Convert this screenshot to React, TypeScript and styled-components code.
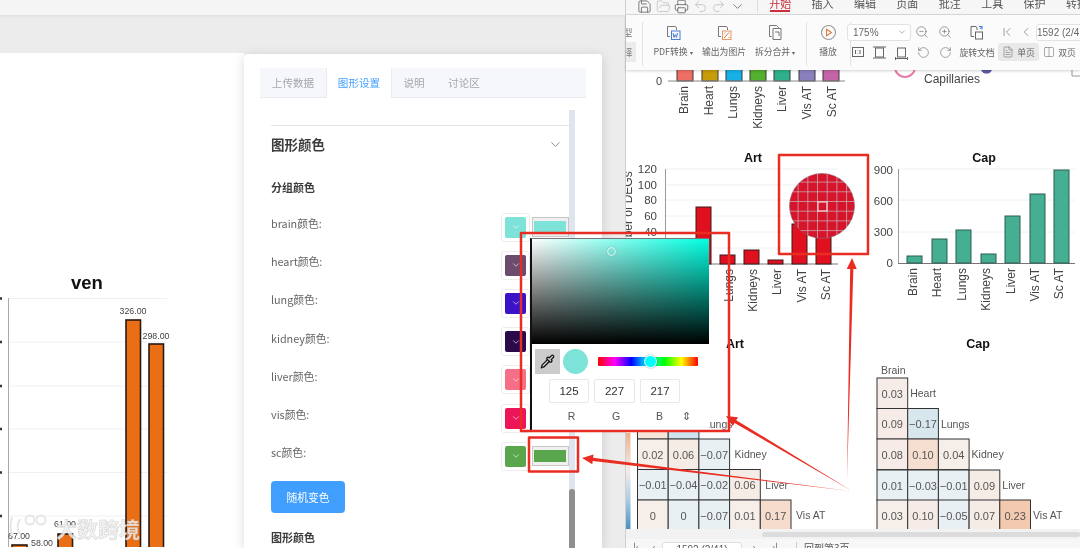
import React from 'react';
import styled, { createGlobalStyle } from 'styled-components';
import {
  ChevronDown, ChevronFirst, ChevronLeft, Columns2, FileText, Pipette, Redo2,
  RotateCcw, RotateCw, Save, Undo2, ZoomIn, ZoomOut, Printer, FolderOpen,
} from 'lucide-react';

const Global = createGlobalStyle`
  html, body { margin: 0; padding: 0; background: #fff; }
  body { font-family: "Liberation Sans", "Noto Sans CJK SC", sans-serif; }
  #root { width: 1080px; height: 548px; overflow: hidden; }
`;

const CJK = `"Noto Sans CJK SC", "Liberation Sans", sans-serif`;

const Page = styled.div`
  position: relative;
  display: flex;
  width: 1080px;
  height: 548px;
  overflow: hidden;
  filter: blur(0.3px);
`;

/* ------- left window ------- */
const LeftWindow = styled.div`
  width: 626px;
  flex: none;
  display: flex;
  flex-direction: column;
  background: #ececec;
`;
const TopStrip = styled.div`
  height: 15px;
  flex: none;
  background: #f5f5f5;
  box-shadow: 0 1px 3px rgba(0, 0, 0, 0.07);
`;
const GreyStrip = styled.div`
  height: 38px;
  flex: none;
`;
const LeftBody = styled.div`
  flex: 1;
  min-height: 0;
  display: flex;
`;
const ChartPane = styled.div`
  width: 244px;
  flex: none;
  background: #fff;
  svg { display: block; }
`;
const Panel = styled.div`
  width: 358px;
  flex: none;
  margin-top: 1px;
  background: #fff;
  border-radius: 3px 3px 0 0;
  box-shadow: 0 2px 12px rgba(0, 0, 0, 0.14);
  padding: 14px 16px 0;
  box-sizing: border-box;
  display: flex;
  flex-direction: column;
  overflow: hidden;
  font-family: ${CJK};
  position: relative;
`;
const Tabs = styled.div`
  display: flex;
  height: 30px;
  flex: none;
  background: #f5f7fa;
  border-bottom: 1px solid #e8ebf0;
  box-sizing: border-box;
`;
const Tab = styled.div<{ $active?: boolean; $w: number }>`
  width: ${(p) => p.$w}px;
  text-align: center;
  line-height: 30px;
  font-size: 10.6px;
  color: ${(p) => (p.$active ? '#409eff' : '#a3a6ad')};
  background: ${(p) => (p.$active ? '#fff' : 'transparent')};
  box-sizing: border-box;
  height: 30px;
  ${(p) => (p.$active ? 'border-left: 1px solid #e8ebf0; border-right: 1px solid #e8ebf0;' : '')}
`;
const ScrollBody = styled.div`
  flex: 1;
  min-height: 0;
  margin-top: 12px;
  display: flex;
  overflow: hidden;
`;
const Content = styled.div`
  width: 298px;
  margin-left: 11px;
  padding-top: 15px;
  flex: none;
`;
const Track = styled.div`
  width: 6px;
  flex: none;
  background: #dfe5ef;
  display: flex;
  flex-direction: column;
  justify-content: flex-end;
`;
const Thumb = styled.div`
  height: 59px;
  background: #8f8f8f;
  border-radius: 3px 3px 0 0;
`;
const AccordionHead = styled.div`
  border-top: 1px solid #e2e4e8;
  height: 36px;
  display: flex;
  align-items: center;
  justify-content: space-between;
  padding-right: 6px;
  font-size: 13.5px;
  font-weight: 700;
  color: #3c3c3c;
  svg { color: #70757d; }
`;
const SubHead = styled.div`
  margin-top: 17px;
  height: 17px;
  line-height: 17px;
  font-size: 11px;
  font-weight: 700;
  color: #3c3c3c;
`;
const ColorRows = styled.div`
  margin-top: 12px;
`;
const ColorRow = styled.div`
  height: 38.2px;
  display: flex;
  align-items: center;
  justify-content: space-between;
`;
const RowLabel = styled.span`
  font-size: 10.8px;
  color: #666;
  margin-bottom: 8px;
`;
const Swatches = styled.div`
  display: flex;
  align-items: center;
  gap: 2px;
`;
const SwatchBox = styled.div`
  width: 29px;
  height: 29px;
  box-sizing: border-box;
  border: 1px solid #ededed;
  border-radius: 3px;
  padding: 3px;
  background: #fff;
`;
const SwatchFill = styled.div<{ $c: string }>`
  width: 100%;
  height: 100%;
  border-radius: 2px;
  background: ${(p) => p.$c};
  display: flex;
  align-items: center;
  justify-content: center;
  color: #fff;
`;
const ColorBar = styled.div<{ $c: string }>`
  width: 37px;
  height: 20px;
  box-sizing: border-box;
  border: 1px solid #c6c6c6;
  background: #f0f0f0;
  padding: 3px 2px 3px 1px;
  &::before {
    content: '';
    display: block;
    height: 100%;
    background: ${(p) => p.$c};
  }
`;
const RandomButton = styled.button`
  display: block;
  margin-top: 6px;
  width: 74px;
  height: 32px;
  border: 0;
  border-radius: 4px;
  background: #409eff;
  color: #fff;
  font-family: ${CJK};
  font-size: 10.8px;
`;
const BottomHead = styled(SubHead)`
  margin-top: 16px;
  font-weight: 700;
`;

/* ------- right window ------- */
const RightWindow = styled.div`
  flex: 1;
  min-width: 0;
  display: flex;
  flex-direction: column;
  background: #fff;
  font-family: ${CJK};
  border-left: 1px solid #cfcfcf;
  margin-left: -1px;
  position: relative;
`;
const RibbonTabs = styled.div`
  height: 15px;
  flex: none;
  display: flex;
  align-items: flex-start;
  background: #f6f6f6;
  border-bottom: 1px solid #dcdcdc;
  box-sizing: border-box;
  overflow: hidden;
  color: #555;
`;
const QuickIcons = styled.div`
  width: 133px;
  flex: none;
  display: flex;
  align-items: center;
  padding-left: 11px;
  box-sizing: border-box;
  gap: 3.5px;
  height: 14px;
  margin-top: -1px;
  svg { width: 15px; height: 15px; flex: none; }
`;
const QuickDivider = styled.div`
  width: 1px;
  height: 14px;
  margin-left: 9px;
  background: #ddd;
  flex: none;
`;
const RibbonTab = styled.div<{ $active?: boolean }>`
  width: 42.4px;
  flex: none;
  text-align: center;
  font-size: 11px;
  line-height: 14px;
  height: 14px;
  margin-top: -4px;
  color: ${(p) => (p.$active ? '#c9303a' : '#555')};
  position: relative;
  ${(p) =>
    p.$active
      ? `&::after { content: ''; position: absolute; left: 11px; right: 11px; bottom: -2px; height: 2px; background: #c9303a; }`
      : ''}
`;
const Tools = styled.div`
  height: 55px;
  flex: none;
  display: flex;
  background: #fbfbfb;
  box-shadow: 0 1px 3px rgba(0, 0, 0, 0.18);
  position: relative;
  z-index: 1;
  color: #666;
  font-size: 8.8px;
  overflow: hidden;
`;
const Stub = styled.div`
  width: 16px;
  flex: none;
  margin-top: 7px;
  height: 44px;
  border-right: 1px solid #e4e4e4;
  display: flex;
  flex-direction: column;
  font-size: 9.5px;
  color: #777;
`;
const StubCell = styled.div<{ $on?: boolean }>`
  height: 20px;
  line-height: 20px;
  text-indent: -3px;
  width: 10px;
  background: ${(p) => (p.$on ? '#ececec' : 'transparent')};
`;
const BigGroup = styled.div`
  display: flex;
  padding: 0 5px 0 4.5px;
  margin-top: 7px;
  height: 44px;
  border-right: 1px solid #e4e4e4;
  flex: none;
`;
const BigTool = styled.div<{ $w: number }>`
  width: ${(p) => p.$w}px;
  flex: none;
  display: flex;
  flex-direction: column;
  align-items: center;
  white-space: nowrap;
`;
const BigIconSlot = styled.div`
  height: 20px;
  display: flex;
  align-items: center;
  justify-content: center;
`;
const BigLabel = styled.div`
  height: 20px;
  line-height: 20px;
`;
const Caret = styled.span`
  font-size: 6px;
  margin-left: 2px;
`;
const Controls = styled.div`
  padding-top: 7px;
  display: flex;
  flex-direction: column;
  flex: none;
  margin-left: -4px;
`;
const ControlRow = styled.div`
  height: 20px;
  display: flex;
  align-items: center;
`;
const ZoomSelect = styled.div`
  width: 64px;
  height: 17px;
  box-sizing: border-box;
  border: 1px solid #e2e2e2;
  border-radius: 3px;
  background: #fff;
  display: flex;
  align-items: center;
  justify-content: space-between;
  padding: 0 3px 0 5px;
  font-size: 10px;
  font-family: "Liberation Sans", sans-serif;
  color: #666;
`;
const Slot = styled.div<{ $w: number }>`
  width: ${(p) => p.$w}px;
  flex: none;
  display: flex;
  align-items: center;
  justify-content: center;
  white-space: nowrap;
`;
const PageInput = styled.div`
  margin-left: 3px;
  width: 60px;
  flex: none;
  height: 17px;
  box-sizing: border-box;
  border: 1px solid #e2e2e2;
  border-radius: 3px;
  background: #fff;
  text-align: right;
  padding-right: 11px;
  line-height: 15px;
  font-size: 10px;
  font-family: "Liberation Sans", sans-serif;
  white-space: nowrap;
`;
const ViewButton = styled.div<{ $on?: boolean }>`
  width: 41px;
  height: 18px;
  flex: none;
  border-radius: 3px;
  background: ${(p) => (p.$on ? '#e9e9e9' : 'transparent')};
  display: flex;
  align-items: center;
  justify-content: center;
  gap: 3px;
  white-space: nowrap;
`;
const DocArea = styled.div`
  flex: 1;
  min-height: 0;
  overflow: hidden;
  svg { display: block; }
`;
const HScroll = styled.div`
  height: 10px;
  flex: none;
  background: #f2f2f2;
  padding: 3px 0 2px 136px;
  box-sizing: border-box;
  position: relative;
`;
const HThumb = styled.div`
  height: 100%;
  background: #dcdcdc;
  border-radius: 3px;
`;
const StatusBar = styled.div`
  height: 9px;
  flex: none;
  background: #f7f7f7;
  display: flex;
  align-items: flex-start;
  color: #555;
  font-size: 10px;
  overflow: hidden;
`;
const StatusArrow = styled.div<{ $w: number }>`
  width: ${(p) => p.$w}px;
  flex: none;
  text-align: center;
  line-height: 12px;
  margin-top: 2px;
  font-size: 10px;
`;
const StatusInput = styled.div`
  width: 80px;
  flex: none;
  height: 16px;
  margin-top: 3px;
  box-sizing: border-box;
  border: 1px solid #dedede;
  border-radius: 3px;
  background: #fff;
  text-align: center;
  font-family: "Liberation Sans", sans-serif;
  line-height: 13px;
`;
const StatusText = styled.div`
  margin-left: 12px;
  padding-left: 7px;
  border-left: 1px solid #ccc;
  line-height: 12px;
  margin-top: 3px;
`;

/* ------- colour picker popover ------- */
const Picker = styled.div`
  position: absolute;
  left: 530px;
  top: 238px;
  width: 179px;
  height: 192px;
  box-sizing: border-box;
  background: #fff;
  border-left: 2px solid #111;
  border-top: 1px solid #777;
  z-index: 3;
  font-family: "Liberation Sans", sans-serif;
`;
const Spectrum = styled.div`
  position: relative;
  width: 177px;
  height: 105px;
  background:
    linear-gradient(to top, #000, transparent),
    linear-gradient(to right, #fff, #00ffe1);
`;
const SpectrumDot = styled.div`
  position: absolute;
  left: 75px;
  top: 8px;
  width: 7px;
  height: 7px;
  border: 1.5px solid #e8f4f2;
  border-radius: 50%;
  box-sizing: content-box;
  box-shadow: 0 0 1px rgba(0, 0, 0, 0.4);
`;
const PickerRow = styled.div`
  display: flex;
  align-items: center;
  padding: 5px 0 0 3px;
  height: 25px;
`;
const Dropper = styled.div`
  width: 25px;
  height: 25px;
  background: #ccc;
  display: flex;
  align-items: center;
  justify-content: center;
  color: #111;
  flex: none;
`;
const Preview = styled.div`
  width: 25px;
  height: 25px;
  margin-left: 3px;
  border-radius: 50%;
  background: rgb(125, 227, 217);
  flex: none;
`;
const Hue = styled.div`
  position: relative;
  width: 100px;
  height: 9px;
  margin-left: 10px;
  background: linear-gradient(to right, #f00, #f0f, #00f, #0ff, #0f0, #ff0, #f00);
  border-radius: 1px;
`;
const HueThumb = styled.div`
  position: absolute;
  left: 46px;
  top: -2px;
  width: 11px;
  height: 11px;
  border: 1px solid #fff;
  border-radius: 50%;
  background: #0ff;
  box-shadow: 0 0 2px rgba(0, 0, 0, 0.4);
`;
const ValueRow = styled.div`
  display: grid;
  grid-template-columns: 40px 41px 40px;
  column-gap: 5px;
  margin: 5px 0 0 17px;
`;
const ValueBox = styled.div`
  height: 24px;
  box-sizing: border-box;
  border: 1px solid #e8e8e8;
  border-radius: 2px;
  text-align: center;
  line-height: 22px;
  font-size: 11.5px;
  color: #333;
`;
const ValueLabels = styled.div`
  display: flex;
  margin: 6px 0 0 17px;
  font-size: 10.5px;
  color: #555;
  line-height: 14px;
`;
const ValueLabel = styled.div<{ $w: number }>`
  width: ${(p) => p.$w}px;
  flex: none;
  text-align: center;
`;
const Annotations = styled.svg`
  position: absolute;
  left: 0;
  top: 0;
  z-index: 4;
  pointer-events: none;
`;

/* ------- data ------- */
const colors: [string, string][] = [
  ['brain', '#7de3d9'],
  ['heart', '#6b4b6e'],
  ['lung', '#3a13c8'],
  ['kidney', '#2b0a4c'],
  ['liver', '#f56f87'],
  ['vis', '#ec1557'],
  ['sc', '#5aa64c'],
];
const organs = ['Brain', 'Heart', 'Lungs', 'Kidneys', 'Liver', 'Vis AT', 'Sc AT'];
const topBars: [number, string][] = [
  [677, '#ee6f66'], [702, '#c89d0a'], [726, '#17b1e8'], [750, '#54b02f'], [774, '#2fb08c'], [799, '#8b80be'], [823, '#c564a8'],
];
const artBars: [number, number][] = [[672, 240], [696, 207], [720, 255], [744, 250], [768, 260], [792, 224], [816, 235]];
const capBars: [number, number][] = [[907, 256], [932, 239], [956, 230], [981, 254], [1005, 216], [1030, 194], [1054, 170]];

type Cell = [string, string];
type HeatRow = { y: number; label: string; cells: Cell[] };
const capRows: HeatRow[] = [
  { y: 378, label: 'Heart', cells: [['0.03', '#f5ece8']] },
  { y: 408.5, label: 'Lungs', cells: [['0.09', '#f6ebe6'], ['−0.17', '#d8e6ee']] },
  { y: 439, label: 'Kidney', cells: [['0.08', '#f6ebe6'], ['0.10', '#f6dfd1'], ['0.04', '#f6eee9']] },
  { y: 470, label: 'Liver', cells: [['0.01', '#e9f0f4'], ['−0.03', '#e9f0f4'], ['−0.01', '#e9f0f4'], ['0.09', '#f6ece6']] },
  { y: 500, label: 'Vis AT', cells: [['0.03', '#f6eee9'], ['0.10', '#f6ebe6'], ['−0.05', '#e9f0f4'], ['0.07', '#f6ece6'], ['0.23', '#f3c9b0']] },
];
const artRows: HeatRow[] = [
  { y: 408.5, label: 'Lungs', cells: [['', '#f6e4d9'], ['', '#cfe3ee']] },
  { y: 439, label: 'Kidney', cells: [['0.02', '#f6eee9'], ['0.06', '#f6ece6'], ['−0.07', '#e9f0f4']] },
  { y: 469.5, label: 'Liver', cells: [['−0.01', '#e9f0f4'], ['−0.04', '#e9f0f4'], ['−0.02', '#e9f0f4'], ['0.06', '#f6ece6']] },
  { y: 500, label: 'Vis AT', cells: [['0', '#f6eee9'], ['0', '#e9f0f4'], ['−0.07', '#e9f0f4'], ['0.01', '#f6eee9'], ['0.17', '#f5dccd']] },
];

const RotLabel = ({ x, y, t }: { x: number; y: number; t: string }) => (
  <text x={x} y={y} transform={`rotate(-90 ${x} ${y})`} textAnchor="end" fontSize="12" fill="#444">{t}</text>
);

const Heat = ({ x0, rows, gap }: { x0: number; rows: HeatRow[]; gap: number }) => (
  <g>
    {rows.map((r) => (
      <g key={r.label}>
        {r.cells.map(([v, c], i) => (
          <g key={i}>
            <rect x={x0 + i * 30.7} y={r.y} width={30.7} height={30.6} fill={c} stroke="#333" strokeWidth="1" />
            <text x={x0 + i * 30.7 + 15.3} y={r.y + 19.5} fontSize="11" fill="#555" textAnchor="middle">{v}</text>
          </g>
        ))}
        <text x={x0 + r.cells.length * 30.7 + gap} y={r.y + 19} fontSize="10.5" fill="#555">{r.label}</text>
      </g>
    ))}
  </g>
);

const LeftChart = () => (
  <svg width="244" height="494" viewBox="0 54 244 494" fontFamily="Liberation Sans, sans-serif">
    <text x="87" y="290" fontSize="18.5" fontWeight="700" textAnchor="middle" fill="#111">ven</text>
    {[299.5, 343, 387, 430, 473.5, 517].map((y) => (
      <g key={y}>
        <line x1="8" x2="167" y1={y} y2={y} stroke="#eef0f3" />
        <line x1="-2" x2="2" y1={y} y2={y} stroke="#333" strokeWidth="2.5" />
      </g>
    ))}
    <line x1="8.5" x2="8.5" y1="299" y2="548" stroke="#aaa" />
    {[[12, 546, 15], [58, 535, 14.5], [126, 321, 14.5], [149, 345, 14.5]].map(([x, y, w]) => (
      <rect key={x} x={x} y={y} width={w} height={548 - y + 4} fill="#ea6f14" stroke="#2a1a10" strokeWidth="1.6" />
    ))}
    <g fontSize="8.8" fill="#444" textAnchor="middle">
      <text x="133" y="315">326.00</text>
      <text x="156" y="340">298.00</text>
      <text x="65" y="528">61.00</text>
      <text x="42" y="547">58.00</text>
      <text x="19" y="540">67.00</text>
    </g>
    <g fill="none" stroke="#e6e6e6" strokeWidth="2">
      <circle cx="30" cy="521" r="4.5" />
      <circle cx="41" cy="521" r="4.5" />
      <path d="M12 518c-2 6-2 12 0 19M20 520c-3 5-3 11 0 15" />
    </g>
    <text x="56" y="538" fontFamily={CJK} fontSize="21" fontWeight="700" fill="#f0f0f0" fillOpacity="0.85" stroke="#b5b5b5" strokeOpacity="0.55" strokeWidth="0.5">大数跨境</text>
  </svg>
);

const DocCharts = () => (
  <svg width="454" height="459" viewBox="626 70 454 459" fontFamily="Liberation Sans, sans-serif">
    {/* top chart stub */}
    {topBars.map(([x, c]) => (
      <rect key={x} x={x} y="66" width="16" height="15" fill={c} stroke="#3a3a3a" />
    ))}
    <line x1="668" x2="845" y1="81" y2="81" stroke="#888" />
    <text x="659" y="85" fontSize="11" fill="#444" textAnchor="middle">0</text>
    {organs.map((t, i) => <RotLabel key={t} x={688 + i * 24.6} y={86} t={t} />)}
    <circle cx="905" cy="67" r="10" fill="none" stroke="#e67ca9" strokeWidth="2" />
    <path d="M981 70 a6 6 0 0 0 11 0" fill="#5a5aa8" />
    <text x="924" y="83" fontSize="12" fill="#444">Capillaries</text>
    <path d="M1072 76 h8 M1072 70 v6" stroke="#999" fill="none" />

    {/* Art bar chart */}
    <text x="753" y="162" fontSize="12.5" fontWeight="700" textAnchor="middle" fill="#111">Art</text>
    {[169, 185, 200, 216, 232, 248].map((y) => <line key={y} x1="665" x2="838" y1={y} y2={y} stroke="#eef0f2" />)}
    <line x1="665.5" x2="665.5" y1="169" y2="264" stroke="#999" />
    <line x1="665" x2="838" y1="264" y2="264" stroke="#777" />
    {[['120', 169], ['100', 185], ['80', 200], ['60', 216], ['40', 232]].map(([t, y]) => (
      <text key={t} x="657" y={Number(y) + 4} fontSize="11.5" textAnchor="end" fill="#444">{t}</text>
    ))}
    <text x="632" y="217" transform="rotate(-90 632 217)" fontSize="12" textAnchor="middle" fill="#444">Number of DEGs</text>
    {artBars.map(([x, y]) => <rect key={x} x={x} y={y} width="15" height={264 - y} fill="#e0101f" stroke="#3a1a1a" />)}
    {organs.slice(2).map((t, i) => <RotLabel key={t} x={733 + i * 24.2} y={269} t={t} />)}

    {/* Cap bar chart */}
    <text x="984" y="162" fontSize="12.5" fontWeight="700" textAnchor="middle" fill="#111">Cap</text>
    {[169, 200, 232].map((y) => <line key={y} x1="898" x2="1075" y1={y} y2={y} stroke="#eef0f2" />)}
    <line x1="898.5" x2="898.5" y1="169" y2="263" stroke="#999" />
    <line x1="898" x2="1075" y1="263.5" y2="263.5" stroke="#777" />
    {[['900', 170], ['600', 201], ['300', 232], ['0', 263]].map(([t, y]) => (
      <text key={t} x="893" y={Number(y) + 4} fontSize="11.5" textAnchor="end" fill="#444">{t}</text>
    ))}
    {capBars.map(([x, y]) => <rect key={x} x={x} y={y} width="15" height={263 - y} fill="#45ae93" stroke="#2b5e50" />)}
    {organs.map((t, i) => <RotLabel key={t} x={917 + i * 24.4} y={268} t={t} />)}

    {/* heat maps */}
    <text x="735" y="348" fontSize="12.5" fontWeight="700" textAnchor="middle" fill="#111">Art</text>
    <text x="978" y="348" fontSize="12.5" fontWeight="700" textAnchor="middle" fill="#111">Cap</text>
    <text x="881" y="374" fontSize="10.5" fill="#555">Brain</text>
    <Heat x0={877} rows={capRows} gap={2.5} />
    <Heat x0={637.5} rows={artRows} gap={5} />
    <defs>
      <linearGradient id="bar" x1="0" y1="0" x2="0" y2="1">
        <stop offset="0" stopColor="#eeb08e" />
        <stop offset="0.4" stopColor="#f3ede9" />
        <stop offset="0.7" stopColor="#a9cde2" />
        <stop offset="1" stopColor="#4a90c0" />
      </linearGradient>
      <clipPath id="lens"><circle cx="822" cy="206" r="32.5" /></clipPath>
    </defs>
    <rect x="626" y="433" width="4.5" height="96" fill="url(#bar)" />

    {/* magnifier */}
    <circle cx="822" cy="206" r="32.5" fill="#d6142b" stroke="#8d6a70" strokeWidth="0.6" />
    <g clipPath="url(#lens)" stroke="#c9a7ad" strokeWidth="0.8">
      {[-3, -2, -1, 0, 1, 2, 3, 4].map((k) => (
        <g key={k}>
          <line x1={817.5 + k * 9.7} x2={817.5 + k * 9.7} y1="170" y2="240" />
          <line y1={201.5 + k * 9.7} y2={201.5 + k * 9.7} x1="785" x2="860" />
        </g>
      ))}
    </g>
    <rect x="818" y="202" width="9" height="9" fill="none" stroke="#f2f2f2" strokeWidth="1" />
  </svg>
);

const PdfIcon = () => (
  <svg width="17" height="17" viewBox="0 0 17 17" fill="none" stroke="#777" strokeWidth="1">
    <path d="M5 12.5H2.5v-10h8l1 1.5v2" />
    <rect x="6.5" y="7" width="8.5" height="8.5" stroke="#4b7bd8" />
    <path d="M8 9l1 4.5 1.2-3 1.3 3 1-4.5" stroke="#4b7bd8" />
  </svg>
);
const ImgIcon = () => (
  <svg width="17" height="17" viewBox="0 0 17 17" fill="none" stroke="#777" strokeWidth="1">
    <path d="M5 12.5H2.5v-10h8l1 1.5v2" />
    <rect x="6.5" y="7" width="8.5" height="8.5" stroke="#e39a6a" />
    <path d="M8 14l5-5.5M8.5 9h1M12.5 13.5h1" stroke="#e0793c" />
  </svg>
);
const SplitIcon = () => (
  <svg width="17" height="17" viewBox="0 0 17 17" fill="none" stroke="#777" strokeWidth="1">
    <path d="M4.5 12.5H2.5v-11h7l2 2v1" />
    <path d="M6 4.5h8v11H6z" />
    <path d="M8 8h4v4" />
  </svg>
);
const PlayIcon = () => (
  <svg width="17" height="17" viewBox="0 0 17 17" fill="none" stroke="#e0793c" strokeWidth="1.1">
    <circle cx="8.5" cy="8.5" r="7" stroke="#999" />
    <path d="M6.5 5.3l5 3.2-5 3.2z" />
  </svg>
);
const RatioIcon = () => (
  <svg width="14" height="14" viewBox="0 0 14 14" fill="none" stroke="#666">
    <rect x="1.5" y="2.5" width="11" height="9" />
    <path d="M4.5 5v4M9 5v4M6.8 5.5v.5M6.8 8v.5" />
  </svg>
);
const FitIcon = ({ both }: { both?: boolean }) => (
  <svg width="15" height="15" viewBox="0 0 15 15" fill="none" stroke="#666">
    <rect x="3.5" y="3" width="8" height="9" />
    <path d="M1 13h13M1 2h13" strokeOpacity={both ? 1 : 0} />
    <path d="M1.5 13.5h12M1.5 12v3M13.5 12v3" strokeOpacity={both ? 0 : 1} />
  </svg>
);
const RotateDocIcon = () => (
  <svg width="17" height="17" viewBox="0 0 17 17" fill="none" stroke="#666">
    <path d="M6 12.5H3V2.5h5l1 1.5v2" />
    <rect x="7.5" y="8" width="7" height="7" />
    <path d="M11 2.5h3v3M14 2.5L12 5" stroke="#3f7de0" />
  </svg>
);

const Arrow = ({ tail, head, w }: { tail: [number, number]; head: [number, number]; w: number }) => {
  const dx = head[0] - tail[0];
  const dy = head[1] - tail[1];
  const len = Math.hypot(dx, dy);
  const ux = dx / len;
  const uy = dy / len;
  const nx = -uy;
  const ny = ux;
  const b: [number, number] = [head[0] - ux * 11, head[1] - uy * 11];
  const pts = [
    tail,
    [b[0] + nx * w, b[1] + ny * w],
    [b[0] + nx * 5, b[1] + ny * 5],
    head,
    [b[0] - nx * 5, b[1] - ny * 5],
    [b[0] - nx * w, b[1] - ny * w],
  ];
  return <polygon points={pts.map((p) => p.join(',')).join(' ')} fill="#e92d22" />;
};

export default function App() {
  return (
    <Page>
      <Global />
      <LeftWindow>
        <TopStrip />
        <GreyStrip />
        <LeftBody>
          <ChartPane><LeftChart /></ChartPane>
          <Panel>
            <Tabs>
              <Tab $w={66}>上传数据</Tab>
              <Tab $w={66} $active>图形设置</Tab>
              <Tab $w={44}>说明</Tab>
              <Tab $w={56}>讨论区</Tab>
            </Tabs>
            <ScrollBody>
              <Content>
                <AccordionHead>
                  图形颜色
                  <ChevronDown size={15} strokeWidth={1.3} />
                </AccordionHead>
                <SubHead>分组颜色</SubHead>
                <ColorRows>
                  {colors.map(([name, c]) => (
                    <ColorRow key={name}>
                      <RowLabel>{name}颜色:</RowLabel>
                      <Swatches>
                        <SwatchBox>
                          <SwatchFill $c={c}><ChevronDown size={10} strokeWidth={1.5} /></SwatchFill>
                        </SwatchBox>
                        <ColorBar $c={c} />
                      </Swatches>
                    </ColorRow>
                  ))}
                </ColorRows>
                <RandomButton>随机变色</RandomButton>
                <BottomHead>图形颜色</BottomHead>
              </Content>
              <Track><Thumb /></Track>
            </ScrollBody>
          </Panel>
        </LeftBody>
      </LeftWindow>

      <RightWindow>
        <RibbonTabs>
          <QuickIcons>
            <Save strokeWidth={1.2} />
            <FolderOpen strokeWidth={1.2} color="#bbb" />
            <Printer strokeWidth={1.2} />
            <Undo2 strokeWidth={1.2} color="#bbb" />
            <Redo2 strokeWidth={1.2} color="#bbb" />
            <ChevronDown strokeWidth={1.2} />
            <QuickDivider />
          </QuickIcons>
          <RibbonTab $active>开始</RibbonTab>
          <RibbonTab>插入</RibbonTab>
          <RibbonTab>编辑</RibbonTab>
          <RibbonTab>页面</RibbonTab>
          <RibbonTab>批注</RibbonTab>
          <RibbonTab>工具</RibbonTab>
          <RibbonTab>保护</RibbonTab>
          <RibbonTab>转换</RibbonTab>
        </RibbonTabs>
        <Tools>
          <Stub>
            <StubCell>型</StubCell>
            <StubCell $on>择</StubCell>
          </Stub>
          <BigGroup>
            <BigTool $w={51}><BigIconSlot><PdfIcon /></BigIconSlot><BigLabel>PDF转换<Caret>▾</Caret></BigLabel></BigTool>
            <BigTool $w={51}><BigIconSlot><ImgIcon /></BigIconSlot><BigLabel>输出为图片</BigLabel></BigTool>
            <BigTool $w={51}><BigIconSlot><SplitIcon /></BigIconSlot><BigLabel>拆分合并<Caret>▾</Caret></BigLabel></BigTool>
          </BigGroup>
          <BigGroup>
            <BigTool $w={34}><BigIconSlot><PlayIcon /></BigIconSlot><BigLabel>播放</BigLabel></BigTool>
          </BigGroup>
          <Controls>
            <ControlRow>
              <ZoomSelect>175%<ChevronDown size={10} strokeWidth={1.2} /></ZoomSelect>
              <Slot $w={22}><ZoomOut size={14} strokeWidth={1.1} /></Slot>
              <Slot $w={24}><ZoomIn size={14} strokeWidth={1.1} /></Slot>
              <Slot $w={38}><RotateDocIcon /></Slot>
              <Slot $w={24}><ChevronFirst size={14} strokeWidth={1.1} /></Slot>
              <Slot $w={14}><ChevronLeft size={14} strokeWidth={1.1} /></Slot>
              <PageInput>1592 (2/41)</PageInput>
            </ControlRow>
            <ControlRow>
              <Slot $w={22}><RatioIcon /></Slot>
              <Slot $w={21}><FitIcon both /></Slot>
              <Slot $w={22}><FitIcon /></Slot>
              <Slot $w={22}><RotateCcw size={13} strokeWidth={1.1} /></Slot>
              <Slot $w={22}><RotateCw size={13} strokeWidth={1.1} /></Slot>
              <Slot $w={42}>旋转文档</Slot>
              <ViewButton $on><FileText size={12} strokeWidth={1.1} />单页</ViewButton>
              <ViewButton><Columns2 size={12} strokeWidth={1.1} />双页</ViewButton>
            </ControlRow>
          </Controls>
        </Tools>
        <DocArea><DocCharts /></DocArea>
        <HScroll><HThumb /></HScroll>
        <StatusBar>
          <StatusArrow $w={20}>|‹</StatusArrow>
          <StatusArrow $w={16}>‹</StatusArrow>
          <StatusInput>1592 (2/41)</StatusInput>
          <StatusArrow $w={24}>›</StatusArrow>
          <StatusArrow $w={18}>›|</StatusArrow>
          <StatusText>回到第3页</StatusText>
        </StatusBar>
      </RightWindow>

      <Picker>
        <Spectrum><SpectrumDot /></Spectrum>
        <PickerRow>
          <Dropper><Pipette size={15} strokeWidth={2} /></Dropper>
          <Preview />
          <Hue><HueThumb /></Hue>
        </PickerRow>
        <ValueRow>
          <ValueBox>125</ValueBox>
          <ValueBox>227</ValueBox>
          <ValueBox>217</ValueBox>
        </ValueRow>
        <ValueLabels>
          <ValueLabel $w={45}>R</ValueLabel>
          <ValueLabel $w={44}>G</ValueLabel>
          <ValueLabel $w={43}>B</ValueLabel>
          <ValueLabel $w={10}>⇕</ValueLabel>
        </ValueLabels>
      </Picker>

      <Annotations width="1080" height="548" viewBox="0 0 1080 548">
        <g fill="none" stroke="#e92d22" strokeWidth="2.5" strokeLinejoin="round">
          <rect x="521" y="233" width="208" height="198" />
          <rect x="529" y="437.5" width="49" height="34" />
          <rect x="779" y="155" width="89" height="99" />
        </g>
        <Arrow tail={[850, 491]} head={[582, 458]} w={1.6} />
        <Arrow tail={[852, 491]} head={[726, 416]} w={1.6} />
        <Arrow tail={[847, 480]} head={[852, 258]} w={1.6} />
      </Annotations>
    </Page>
  );
}
